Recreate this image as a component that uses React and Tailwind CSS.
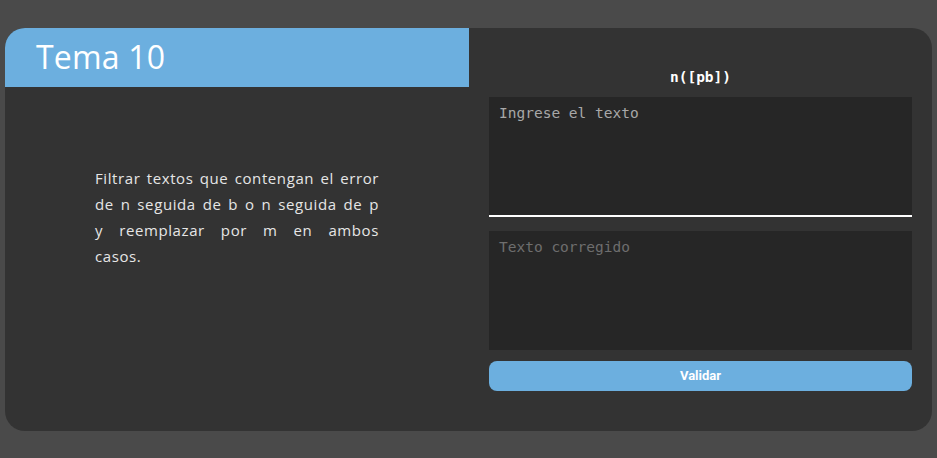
const lines = [
  "Filtrar textos que contengan el error",
  "de n seguida de b o n seguida de p",
  "y reemplazar por m en ambos",
];

export default function App() {
  return (
    <div className="min-h-screen w-full bg-[#4a4a4a] pt-[28px] px-[5px]">
      <div className="flex h-[403px] w-[927px] overflow-hidden rounded-[20px] bg-[#333333]">
        <div className="flex w-[464px] flex-col">
          <div className="h-[59px] bg-[#6cafdf] pl-[31px] pt-[9px]">
            <h1 className="font-['Open_Sans',sans-serif] text-[32px] leading-[40px] font-normal tracking-[0.2px] text-white">
              Tema 10
            </h1>
          </div>
          <div className="pl-[90px] pt-[78px]">
            <div className="w-[284px] font-['Open_Sans',sans-serif] text-[15px] leading-[26px] tracking-[0.6px] text-[#e6e6e6]">
              {lines.map((l) => (
                <span key={l} className="block text-justify [text-align-last:justify]">
                  {l}
                </span>
              ))}
              <span className="block">casos.</span>
            </div>
          </div>
        </div>
        <div className="flex flex-1 flex-col px-[20px] pt-[40px]">
          <div className="text-center font-['DejaVu_Sans_Mono',monospace] text-[14.5px] leading-[18px] font-bold text-white">
            n([pb])
          </div>
          <textarea
            placeholder="Ingrese el texto"
            className="mt-[11px] h-[120px] w-full resize-none border-b-2 border-white bg-[#262626] px-[10px] py-[6px] font-['DejaVu_Sans_Mono',monospace] text-[14.5px] text-white outline-none placeholder:text-[#a8a8a8]"
          />
          <textarea
            placeholder="Texto corregido"
            className="mt-[14px] h-[119px] w-full resize-none bg-[#262626] px-[10px] py-[6px] font-['DejaVu_Sans_Mono',monospace] text-[14.5px] text-white outline-none placeholder:text-[#6e6e6e]"
          />
          <button className="mt-[11px] h-[30px] w-full rounded-[8px] bg-[#6cafdf] font-['Roboto',sans-serif] text-[13px] font-bold text-white">
            Validar
          </button>
        </div>
      </div>
    </div>
  );
}
